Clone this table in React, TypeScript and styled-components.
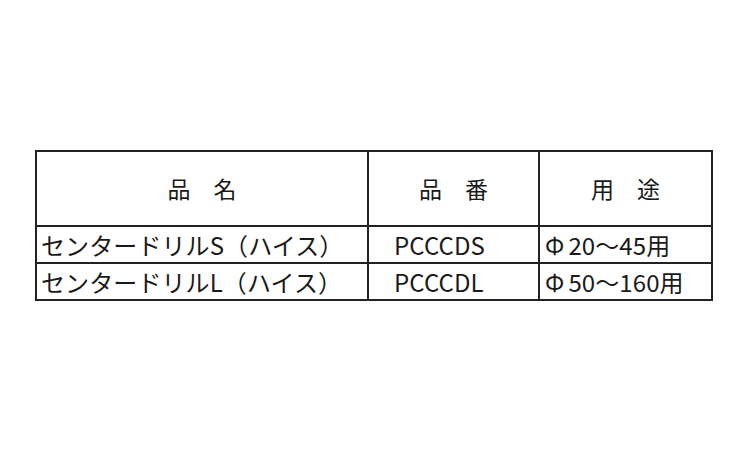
import styled, { createGlobalStyle } from 'styled-components';

type Row = {
  name: string;
  code: string;
  size: string;
};

const rows: Row[] = [
  { name: 'センタードリルS（ハイス）', code: 'PCCCDS', size: '20～45用' },
  { name: 'センタードリルL（ハイス）', code: 'PCCCDL', size: '50～160用' },
];

const App = () => {
  return (
    <>
      <GlobalStyle />
      <Page>
        <Table>
          <colgroup>
            <col style={{ width: 332 }} />
            <col style={{ width: 171 }} />
            <col style={{ width: 173 }} />
          </colgroup>
          <thead>
            <tr>
              <HeadCell>品　名</HeadCell>
              <HeadCell>品　番</HeadCell>
              <HeadCell>用　途</HeadCell>
            </tr>
          </thead>
          <tbody>
            {rows.map((row) => (
              <tr key={row.code}>
                <Cell>{row.name}</Cell>
                <Cell $indent={25}>{row.code}</Cell>
                <Cell $indent={5}>
                  <Phi>Φ</Phi>
                  {row.size}
                </Cell>
              </tr>
            ))}
          </tbody>
        </Table>
      </Page>
    </>
  );
};

const GlobalStyle = createGlobalStyle`
  html, body {
    margin: 0;
    padding: 0;
    background: #ffffff;
  }

  body {
    font-family: "Noto Sans CJK JP", "Noto Sans", sans-serif;
    color: #1a1a1a;
  }
`;

const Page = styled.div`
  width: 750px;
  height: 450px;
  display: flex;
  align-items: center;
  justify-content: center;
`;

const Table = styled.table`
  border-collapse: collapse;
  table-layout: fixed;
  width: 678px;
  margin-left: -2px;
  border: 2px solid #222;
`;

const HeadCell = styled.th`
  height: 73px;
  padding: 0;
  border: 2px solid #222;
  font-weight: 400;
  font-size: 23px;
  text-align: center;
  vertical-align: middle;
`;

const Cell = styled.td<{ $indent?: number }>`
  height: 35px;
  padding: 0 0 0 ${(p) => p.$indent ?? 4}px;
  border: 2px solid #222;
  font-size: 24px;
  line-height: 35px;
  white-space: nowrap;
  text-align: left;
  vertical-align: middle;
  letter-spacing: 0.1px;
`;

const Phi = styled.span`
  margin-right: 4px;
`;

export default App;
